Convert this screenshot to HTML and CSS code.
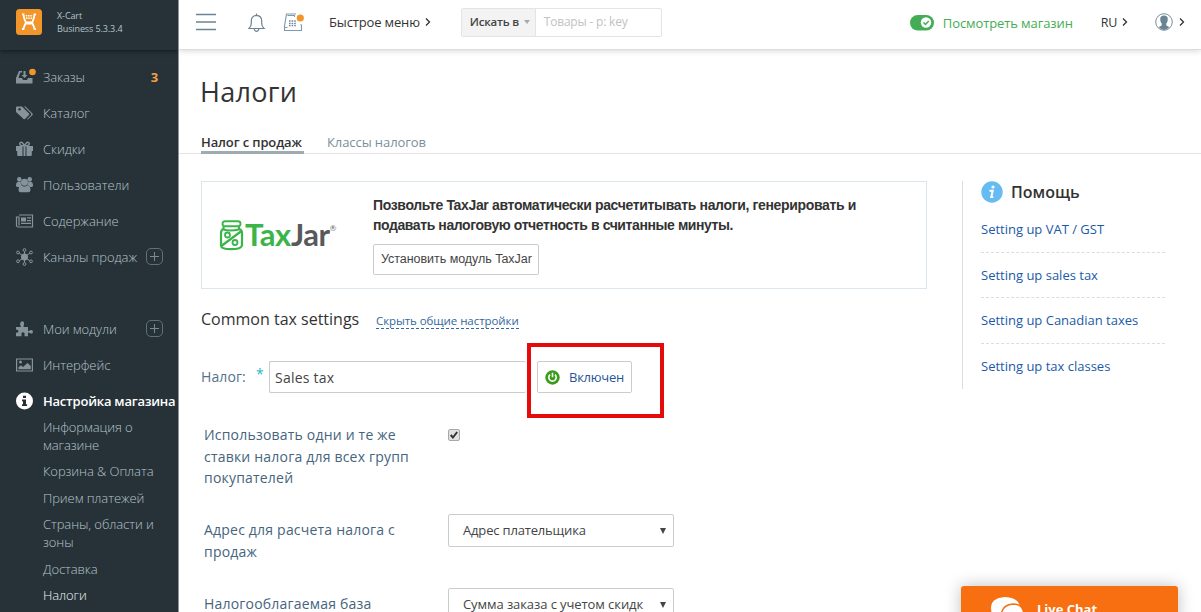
FILE: index.html
```html
<!DOCTYPE html>
<html lang="ru">
<head>
<meta charset="utf-8">
<title>Налоги</title>
<link rel="stylesheet" href="styles.css">
</head>
<body>
<div class="app">
  <aside class="sidebar">
    <div class="brand">
      <svg class="brand-logo" width="26" height="26" viewBox="0 0 26 26"><rect width="26" height="26" rx="3.500" fill="#f2962b"/><path d="M6 5.300h1.500Q8 9.500 9 11.500q.7 2 1.200 2h5.600q.5 0 1.200-2 1-2 1.500-6.200H20M6 20h1.500q.5-2.500 2-5.500h7q1.500 3 2 5.500H20" fill="none" stroke="#fff" stroke-width="1.800"/><path d="M9.700 6.800h7M10 9.300h6.500" stroke="#fff" stroke-width="1.400" stroke-dasharray="1.500 .8"/></svg>
      <div class="brand-text"><span class="brand-name">X-Cart</span><span class="brand-version">Business 5.3.3.4</span></div>
    </div>
    <nav class="menu">
      <a class="item"><svg class="ico" viewBox="0 0 18 18"><path d="M3 3h3v1.500H4.200L2.500 10H6l1 2h4l1-2h4.500v5.500H0V10zM7.500 3h2v4h2L8.500 10 5.500 7h2z"/><circle cx="16.500" cy="4" r="3.300" fill="#f2962b"/></svg><span class="t-orders">Заказы</span><b class="count">3</b></a>
      <a class="item"><svg class="ico" viewBox="0 0 18 18"><path fill-rule="evenodd" d="M0 3.500Q0 2.500 1 2.500h5l7 7q.7.700 0 1.400l-4 4q-.7.700-1.400 0L0 8zm3.500.5a1.300 1.300 0 1 0 .1 0z"/><path d="M8 2.500h1.500l7 7q.7.700 0 1.400l-4.300 4.300q-.6.500-1.200 0l3.800-4q1-1 0-2z"/></svg><span class="t-catalog">Каталог</span></a>
      <a class="item"><svg class="ico" viewBox="0 0 18 18"><path d="M0 6h6.500v5H0zM10.500 6H17v5h-6.500zM1.200 11h5.300v5H2.200q-1 0-1-1zM10.500 11h5.300v4q0 1-1 1h-4.300zM7.500 7h2v9h-2z"/><path d="M8.500 6Q6.500 2 5 2.300 3 3 4 4.700 5 6 8.500 6q3.500 0 4.500-1.300 1-1.700-1-2.400Q10.500 2 8.500 6z" fill="none" stroke="#87939a" stroke-width="1.400"/></svg><span class="t-sales">Скидки</span></a>
      <a class="item"><svg class="ico" viewBox="0 0 18 18"><circle cx="3.300" cy="3.400" r="2.300"/><circle cx="13.700" cy="3.400" r="2.300"/><circle cx="8.500" cy="6.300" r="3.500"/><path d="M0 9.500Q0 5.500 2.500 6h2.300Q4.500 8 6 9.500q-2 0-2.700 1.500H1.500Q0 11 0 9.500zM17 9.500Q17 5.500 14.500 6h-2.300q.3 2-1.200 3.500 2 0 2.700 1.500h1.800q1.500 0 1.500-1.500zM2.500 14q0-4.500 3-4.500 3 2 6 0 3 0 3 4.500 0 2.300-2.200 2.300H4.700Q2.500 16.300 2.500 14z"/></svg><span class="t-users">Пользователи</span></a>
      <a class="item"><svg class="ico" viewBox="0 0 18 18"><path d="M3 3h13.500v12H2q-1.500 0-1.500-1.500V5H3v8.500" fill="none" stroke="#87939a" stroke-width="1.200"/><path d="M5 5.500h5v4H5zM11 5.300h4v1.200h-4zM11 8h4v1.200h-4zM5 10.800h10V12H5z"/></svg><span class="t-content">Содержание</span></a>
      <a class="item"><svg class="ico" viewBox="0 0 18 18"><circle cx="8.500" cy="9" r="3.500"/><path d="M8.500 9V3M8.500 9v6M8.500 9 3 5M8.500 9l5.500-4M8.500 9 3 13M8.500 9l5.500 4" stroke="#87939a"/><g fill="#263238" stroke="#87939a"><circle cx="8.500" cy="2" r="1.400"/><circle cx="8.500" cy="16" r="1.400"/><circle cx="2" cy="4.500" r="1.400"/><circle cx="15" cy="4.500" r="1.400"/><circle cx="2" cy="13.300" r="1.400"/><circle cx="15" cy="13.300" r="1.400"/></g></svg><span class="t-channels">Каналы продаж</span><i class="plus"></i></a>
      <a class="item gap"><svg class="ico" viewBox="0 0 18 18"><path d="M0 7h5Q3.700 4.500 4.200 3 5 1 6.500 1.200 8.500 1.500 8 4L7.500 7H12v4q2 0 2.500-1 2.500-.3 2.500 1.700 0 2.200-2.500 1.800-.8-1-2.500-1v3.800H8.500v-3.300q-1.500-1.500-3 0v3.300H0v-3.500q2.500 0 2.500-1.500T0 9.500z"/></svg><span class="t-addons">Мои модули</span><i class="plus"></i></a>
      <a class="item"><svg class="ico" viewBox="0 0 18 18"><path d="M.6 3h15.800v12H.6z" fill="none" stroke="#87939a" stroke-width="1.200"/><circle cx="4.500" cy="6" r="1.500"/><path d="M2.500 13.300v-2l2.500-2 2 1.700L11.500 7l3.300 3v3.300z"/></svg><span class="t-look">Интерфейс</span></a>
      <a class="item current"><svg class="ico" viewBox="0 0 18 18"><circle cx="8.500" cy="9" r="8.500" fill="#fff"/><path d="M7 3.700h3v2.300H7zM6 7.400h4v4.800h1.100V14H6v-1.800h1V9.200H6z" fill="#263238"/></svg><span class="t-setup">Настройка магазина</span></a>
    </nav>
    <div class="submenu">
      <a>Информация о<br>магазине</a><a>Корзина &amp; Оплата</a><a>Прием платежей</a><a>Страны, области и<br>зоны</a><a>Доставка</a><a class="on">Налоги</a>
    </div>
  </aside>

  <div class="page">
    <header class="topbar">
      <svg class="burger" width="21" height="18" viewBox="0 0 21 18"><path d="M0 1.500h20M0 9h20M0 16.500h20" stroke="#6b8494" stroke-width="1.500"/></svg>
      <svg class="bell" width="18" height="20" viewBox="0 0 18 20"><path d="M1 16.500q2.300-2 2.300-5V9q0-5.200 5.200-5.700Q13.700 3.800 13.700 9v2.500q0 3 2.300 5zM8.500 3.300V1.500M6.200 17q.3 2.300 2.300 2.300t2.300-2.300" fill="none" stroke="#6b8494" stroke-width="1.200"/></svg>
      <svg class="register" width="22" height="20" viewBox="0 0 22 20"><path d="M13 2H3.500L1.500 14v4.500h17V13l-1-.5M1.500 15.500h3M4.500 3.500h7V5" fill="none" stroke="#7e99aa" stroke-width="1.100"/><path d="M6 9h7M6 11.300h7M6 13.500h7" stroke="#6b8494" stroke-width="1.300" stroke-dasharray="1.600 1"/><circle cx="17.300" cy="6" r="3.600" fill="#f2962b"/></svg>
      <span class="quick">Быстрое меню</span><svg class="chev c1" viewBox="0 0 6 8"><path d="m1 .5 3.500 3.500L1 7.500"/></svg>
      <div class="search"><span class="search-in"><b>Искать в</b><svg width="6" height="4" viewBox="0 0 6 4"><path d="M0 0h6L3 4z" fill="#aaa"/></svg></span><span class="search-text">Товары - p: key</span></div>
      <div class="right">
        <svg class="toggle" width="24" height="16" viewBox="0 0 24 16"><rect width="24" height="15.500" rx="7.750" fill="#43ad55"/><circle cx="16" cy="7.500" r="5.200" fill="#fff"/><path d="m13.500 7.500 2 2 3.300-3.500" fill="none" stroke="#43ad55" stroke-width="1.500"/></svg>
        <span class="view">Посмотреть магазин</span>
        <span class="lang">RU</span><svg class="chev c2" viewBox="0 0 6 8"><path d="m1 .5 3.500 3.500L1 7.500"/></svg>
        <svg class="avatar" width="18" height="18" viewBox="0 0 18 18"><circle cx="9" cy="9" r="8.300" fill="#fff" stroke="#78909c"/><path d="M5.200 6q0-3.300 3.800-3.500 3.800.2 3.800 3.500 0 3-1.500 4.500v2l3 1.500Q12 17 9 17t-5.300-3l3-1.500v-2Q5.200 9 5.200 6z" fill="#6b8494"/></svg>
        <svg class="chev c3" viewBox="0 0 6 8"><path d="m1 .5 3.500 3.500L1 7.500"/></svg>
      </div>
    </header>
    <h1>Налоги</h1>
    <div class="tabs"><a class="tab active">Налог с продаж</a><a class="tab second">Классы налогов</a></div>
    <div class="columns">
      <main>
        <section class="promo">
          <div class="taxjar"><svg width="26" height="31" viewBox="0 0 26 31"><rect x="3.500" y="1.300" width="18" height="5" rx="2.500" fill="none" stroke="#3bb54a" stroke-width="1.900"/><path d="M4.500 6.500v2.200Q2 10 2 13v12.500q0 3.700 10 3.700t11-3.700V13q0-3-3-4.300V6.500M4.500 9.500q6 2 15.500 0M3 25.500 22.500 11" fill="none" stroke="#3bb54a" stroke-width="2.200"/><circle cx="8.500" cy="15" r="2.500" fill="none" stroke="#3bb54a" stroke-width="1.800"/><circle cx="16" cy="22.500" r="2.500" fill="none" stroke="#3bb54a" stroke-width="1.800"/></svg><span class="tax">Tax</span><span class="jar">Jar</span><sup>®</sup></div>
          <div class="promo-body"><p><span class="p1">Позвольте TaxJar автоматически расчетитывать налоги, генерировать и</span><br><span class="p2">подавать налоговую отчетность в считанные минуты.</span></p><button class="install">Установить модуль TaxJar</button></div>
        </section>
        <div class="heading"><h2>Common tax settings</h2><a class="hide">Скрыть общие настройки</a></div>
        <div class="tax-row"><label>Налог:</label><span class="star">*</span><div class="input">Sales tax</div>
          <div class="switch-wrap"><button class="switch"><svg width="15" height="15" viewBox="0 0 15 15"><circle cx="7.500" cy="7.500" r="7.200" fill="#3b9b1c"/><path d="M5 4.700a3.700 3.700 0 1 0 5 0M7.500 2.800v4.500" fill="none" stroke="#fff" stroke-width="1.600"/></svg><span>Включен</span></button><div class="highlight"></div></div>
        </div>
        <div class="field f1"><label>Использовать одни и те же<br>ставки налога для всех групп<br>покупателей</label><svg class="check" width="12" height="12" viewBox="0 0 12 12"><rect x=".5" y=".5" width="11" height="11" rx="1.500" fill="#e0e0e0" stroke="#a8a8a8"/><path d="m2.700 6 2.200 2.500L9.200 3" fill="none" stroke="#333" stroke-width="2"/></svg></div>
        <div class="field f2"><label>Адрес для расчета налога с<br>продаж</label><div class="select"><span class="o1">Адрес плательщика</span><i></i></div></div>
        <div class="field f3"><label>Налогооблагаемая база</label><div class="select"><span class="o2">Сумма заказа с учетом скидк</span><i></i></div></div>
      </main>
      <aside class="help">
        <h3><svg width="22" height="22" viewBox="0 0 22 22"><circle cx="11" cy="11" r="10.700" fill="#66bcf2"/><circle cx="12" cy="6" r="1.600" fill="#fff"/><path d="M8.500 9.800h3.200L10.300 16h2" fill="none" stroke="#fff" stroke-width="2"/></svg><span>Помощь</span></h3>
        <a>Setting up VAT / GST</a><a>Setting up sales tax</a><a>Setting up Canadian taxes</a><a>Setting up tax classes</a>
      </aside>
    </div>
  </div>
  <div class="chat"><svg width="34" height="30" viewBox="0 0 34 30"><path d="M1 11Q1 1 15 0q14 1 15 10v10H2z" fill="#fff"/><path d="M11 20q0-12 12-13 10 0 11 10v10H12z" fill="#fff" stroke="#f76f10" stroke-width="1.500"/></svg><span>Live Chat</span></div>
</div>
</body>
</html>
```
FILE: styles.css
```css
* { box-sizing: border-box; }
body { margin: 0; width: 1201px; height: 612px; overflow: hidden; background: #fff; font-family: "Open Sans", "Noto Sans", sans-serif; font-size: 13px; color: #333; }
.app { position: relative; display: grid; grid-template-columns: 179px 1fr; width: 1201px; height: 612px; overflow: hidden; white-space: nowrap; }
button { margin: 0; font: inherit; white-space: nowrap; }

.sidebar { background: #263238; color: #b6c3ca; border-right: 1px solid #8c969b; height: 612px; overflow: hidden; font-weight: 300; }
.brand { display: flex; height: 50px; padding: 9px 0 0 16px; box-shadow: 0 1px 5px rgba(0,0,0,.55); }
.brand-text { display: flex; flex-direction: column; margin-left: 15px; font-size: 9px; line-height: 13px; font-weight: 400; letter-spacing: -.1px; }
.menu { padding-top: 9px; }
.item { display: flex; align-items: center; height: 36px; padding-left: 16px; font-size: 13px; }
.item span, .item b { padding-bottom: 1px; letter-spacing: -.06px; }
.ico { width: 18px; height: 18px; margin-right: 9px; flex: none; overflow: visible; fill: #87939a; }
.count { margin-left: auto; margin-right: 20px; color: #f2a046; font-size: 13px; font-weight: 700; }
.item.gap { margin-top: 36px; }
.plus { position: relative; width: 17px; height: 17px; border: 1px solid #607078; border-radius: 5px; margin-left: auto; margin-right: 15px; margin-bottom: 1px; }
.plus::before, .plus::after { content: ""; position: absolute; background: #7c8a91; }
.plus::before { left: 3px; right: 3px; top: 7px; height: 1px; }
.plus::after { top: 3px; bottom: 3px; left: 7px; width: 1px; }
.current { color: #fff; font-weight: 600; }
.item .t-setup { letter-spacing: -.22px; }
.submenu { display: flex; flex-direction: column; align-items: flex-start; gap: 8.400px; padding-left: 43px; line-height: 18px; margin-top: -1px; letter-spacing: -.08px; }
.on { color: #eef3f5; }

.page { background: #fff; height: 612px; overflow: hidden; }
.topbar { display: flex; align-items: center; height: 50px; padding-left: 17px; padding-bottom: 5px; border-bottom: 1px solid #ddd; box-shadow: 0 1px 6px rgba(0,0,0,.16); }
.bell { margin-left: 31px; }
.register { margin-left: 17px; }
.quick { margin-left: 24px; color: #333; letter-spacing: -.15px; }
.chev { width: 6px; height: 8px; fill: none; stroke: #333; stroke-width: 1.300; overflow: visible; flex: none; }
.c1 { margin-left: 5px; }
.search { display: flex; width: 201px; height: 29px; border: 1px solid #e4e4e4; border-radius: 2px; margin-left: 30px; font-size: 12px; line-height: 26px; }
.search-in { display: flex; align-items: center; gap: 5px; width: 74px; padding-left: 8px; background: #f3f3f3; border-right: 1px solid #e4e4e4; }
.search-in b { font-weight: 600; color: #444; font-size: 11.500px; letter-spacing: -.2px; }
.search-text { padding-left: 8px; color: #c2c2c2; letter-spacing: -.2px; }
.right { display: flex; align-items: center; margin-left: auto; padding-right: 16px; }
.view { margin-left: 9px; color: #43ad55; padding-top: 2px; letter-spacing: -.1px; }
.toggle { margin-top: 2px; }
.lang { margin-left: 28px; font-size: 12.500px; letter-spacing: -.3px; }
.c2 { margin-left: 5px; }
.avatar { margin-left: 27px; }
.c3 { margin-left: 6px; }

h1, h2, h3, p { margin: 0; font-weight: 400; }
h1 { height: 78px; padding: 22px 0 0 21px; font-size: 27px; line-height: 40px; letter-spacing: .3px; }
.tabs { display: flex; height: 26px; padding-left: 22px; border-bottom: 1px solid #e5e5e5; line-height: 28px; }
.tab { height: 26px; }
.active { width: 103px; font-weight: 600; border-bottom: 3px solid #9eabb1; letter-spacing: -.13px; }
.second { margin-left: 23px; color: #78909c; letter-spacing: -.08px; }
.columns { display: flex; padding: 27px 0 0 22px; }
main { width: 726px; }
.promo { display: flex; height: 108px; border: 1px solid #dbe7ec; font-family: "Liberation Sans", Arial, sans-serif; }
.taxjar { display: flex; width: 171px; padding: 38px 0 0 17px; font-family: Lato, sans-serif; font-size: 31px; line-height: 31px; font-weight: 700; letter-spacing: -.4px; }
.taxjar span { margin-top: -1px; }
.tax { color: #3bb54a; }
.jar { color: #58595b; }
.taxjar sup { font-size: 8px; line-height: 16px; font-weight: 400; color: #666; }
.promo-body { padding-top: 13px; }
.promo p { font-size: 14px; line-height: 20px; font-weight: 700; color: #333; }
.p1 { letter-spacing: -.34px; }
.p2 { letter-spacing: -.41px; }
.install { display: block; width: 166px; height: 31px; margin-top: 9px; padding: 0 0 2px 7px; text-align: left; font-size: 12.500px; letter-spacing: -.04px; border: 1px solid #ccc; border-radius: 2px; background: #fff; color: #444; }
.heading { display: flex; align-items: baseline; height: 46px; padding-top: 18px; }
h2 { font-size: 16px; line-height: 24px; width: 175px; }
.hide { font-size: 11.500px; line-height: 15px; letter-spacing: -.07px; color: #31699e; border-bottom: 1px dashed #31699e; }
.tax-row { display: flex; margin-top: 26px; height: 32px; line-height: 32px; }
.tax-row label { width: 55px; font-size: 14px; color: #55738a; letter-spacing: .1px; }
.star { width: 13px; color: #29b6c8; line-height: 26px; font-size: 14px; }
.input { width: 257px; height: 32px; border: 1px solid #ccc; border-right: 0; border-radius: 2px; padding-left: 5px; line-height: 31px; font-size: 14px; letter-spacing: .22px; color: #444; }
.switch-wrap { position: relative; margin-left: 11px; }
.switch { display: flex; align-items: center; width: 95px; height: 32px; padding: 0 0 0 7px; border: 1px solid #ccc; border-radius: 2px; background: #fff; color: #28559a; }
.switch span { margin-left: 9px; letter-spacing: -.25px; }
.highlight { position: absolute; left: -10px; top: -18px; width: 137px; height: 75px; border: 4px solid #e60b0b; }
.field { display: flex; padding-left: 3px; font-size: 14px; line-height: 21.500px; color: #46647d; }
.field label { width: 244px; letter-spacing: .2px; }
.f1 { margin-top: 31px; height: 66px; }
.check { margin-top: 5px; }
.f2 { margin-top: 24px; height: 74px; }
.f2 label, .f3 label { padding-top: 5px; }
.select { display: flex; align-items: center; justify-content: space-between; width: 226px; height: 33px; border: 1px solid #ccc; border-radius: 2px; padding: 0 7px 0 14px; font-size: 13px; color: #444; }
.o1 { letter-spacing: -.17px; }
.o2 { letter-spacing: -.08px; }
.select i { border: 3px solid transparent; border-top: 6px solid #444; border-bottom: 0; }
.help { width: 203px; height: 208px; margin-left: 35px; padding-left: 18px; border-left: 1px solid #ddd; }
h3 { display: flex; height: 26px; gap: 8px; font-size: 16px; line-height: 23px; font-weight: 600; }
.help a { display: block; height: 45.700px; padding-top: 11px; line-height: 22px; color: #1a5aa8; border-bottom: 1px dashed #ddd; }
.help a:last-child { border: 0; }
.chat { position: absolute; left: 961px; top: 586px; display: flex; width: 217px; height: 40px; padding: 11px 0 0 29px; background: #f76f10; border-radius: 3px 3px 0 0; box-shadow: 0 0 16px rgba(0,0,0,.25); color: #fff; font-weight: 700; line-height: 24px; }
.chat span { margin-left: 13px; }
```
